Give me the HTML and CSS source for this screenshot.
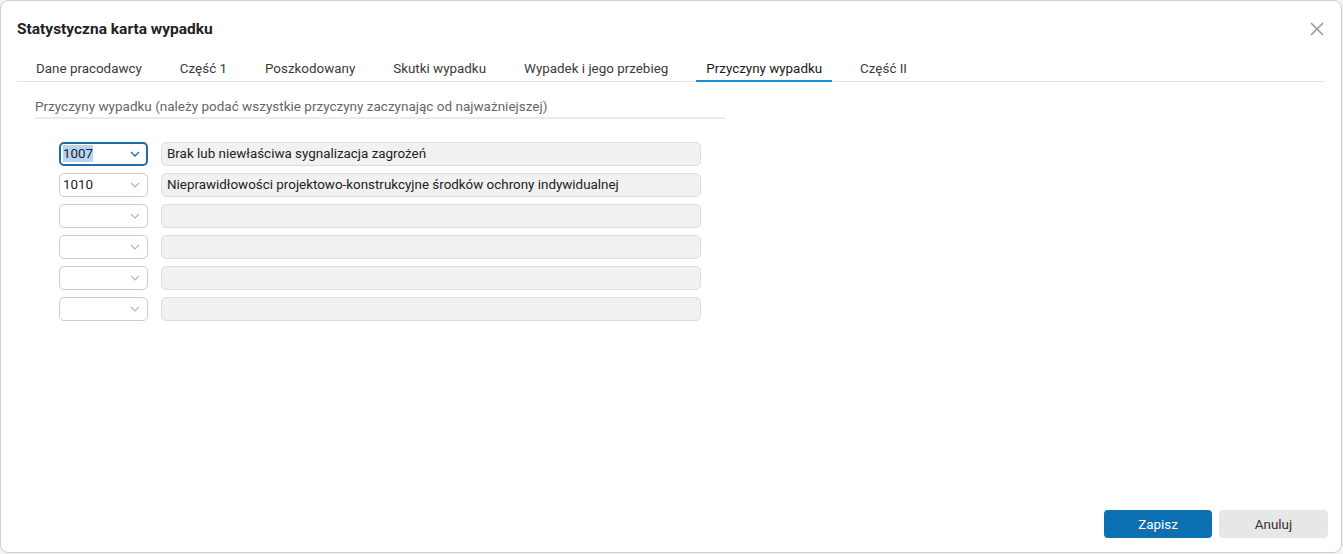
FILE: index.html
```html
<!DOCTYPE html>
<html lang="pl">
<head>
<meta charset="utf-8">
<title>Statystyczna karta wypadku</title>
<link rel="stylesheet" href="styles.css">
</head>
<body>
<div class="dialog">
  <div class="header">
    <h1 class="title">Statystyczna karta wypadku</h1>
    <button class="close" aria-label="Zamknij">
      <svg width="14" height="14" viewBox="0 0 14 14"><path d="M1 1 L13 13 M13 1 L1 13" stroke="#9a9a9a" stroke-width="1.6" fill="none"/></svg>
    </button>
  </div>
  <div class="tabs">
    <div class="tab">Dane pracodawcy</div>
    <div class="tab">Część 1</div>
    <div class="tab">Poszkodowany</div>
    <div class="tab">Skutki wypadku</div>
    <div class="tab">Wypadek i jego przebieg</div>
    <div class="tab active">Przyczyny wypadku</div>
    <div class="tab">Część II</div>
  </div>
  <div class="content">
    <div class="section-label">Przyczyny wypadku (należy podać wszystkie przyczyny zaczynając od najważniejszej)</div>
    <div class="rows">
      <div class="row">
        <div class="select focused"><span class="val"><span class="sel">1007</span></span><svg class="chev" width="10" height="6" viewBox="0 0 10 6"><path d="M1 1 L5 5 L9 1" stroke="#1d6ca5" stroke-width="1.3" fill="none"/></svg></div>
        <div class="field">Brak lub niewłaściwa sygnalizacja zagrożeń</div>
      </div>
      <div class="row">
        <div class="select"><span class="val">1010</span><svg class="chev" width="10" height="6" viewBox="0 0 10 6"><path d="M1 1 L5 5 L9 1" stroke="#b5b5b5" stroke-width="1.1" fill="none"/></svg></div>
        <div class="field">Nieprawidłowości projektowo-konstrukcyjne środków ochrony indywidualnej</div>
      </div>
      <div class="row">
        <div class="select"><span class="val"></span><svg class="chev" width="10" height="6" viewBox="0 0 10 6"><path d="M1 1 L5 5 L9 1" stroke="#b5b5b5" stroke-width="1.1" fill="none"/></svg></div>
        <div class="field"></div>
      </div>
      <div class="row">
        <div class="select"><span class="val"></span><svg class="chev" width="10" height="6" viewBox="0 0 10 6"><path d="M1 1 L5 5 L9 1" stroke="#b5b5b5" stroke-width="1.1" fill="none"/></svg></div>
        <div class="field"></div>
      </div>
      <div class="row">
        <div class="select"><span class="val"></span><svg class="chev" width="10" height="6" viewBox="0 0 10 6"><path d="M1 1 L5 5 L9 1" stroke="#b5b5b5" stroke-width="1.1" fill="none"/></svg></div>
        <div class="field"></div>
      </div>
      <div class="row">
        <div class="select"><span class="val"></span><svg class="chev" width="10" height="6" viewBox="0 0 10 6"><path d="M1 1 L5 5 L9 1" stroke="#b5b5b5" stroke-width="1.1" fill="none"/></svg></div>
        <div class="field"></div>
      </div>
    </div>
  </div>
  <div class="footer">
    <button class="btn primary">Zapisz</button>
    <button class="btn secondary">Anuluj</button>
  </div>
</div>
</body>
</html>
```
FILE: styles.css
```css
* { box-sizing: border-box; }
html, body {
  margin: 0;
  padding: 0;
  background: #f4f4f4;
  font-family: Roboto, "Liberation Sans", sans-serif;
  font-size: 13.4px;
  color: #333;
}
.dialog {
  width: 1342px;
  height: 553px;
  background: #fff;
  border: 1px solid #cfcfcf;
  border-radius: 8px;
  display: flex;
  flex-direction: column;
}
.header {
  display: flex;
  justify-content: space-between;
  align-items: center;
  padding: 18px 17px 17px 16px;
}
.title {
  margin: 0;
  font-size: 15.5px;
  line-height: 20px;
  font-weight: 700;
  color: #222;
}
.close {
  border: 0;
  background: none;
  padding: 0;
  width: 14px;
  height: 14px;
  display: block;
}
.close svg { display: block; }
.tabs {
  display: flex;
  gap: 18px;
  margin: 0 16px;
  padding-left: 9px;
  border-bottom: 1px solid #e2e2e2;
}
.tab {
  padding: 5px 10px 3px;
  line-height: 16px;
  font-size: 13.4px;
  color: #3a3a3a;
  border-bottom: 2px solid transparent;
  margin-bottom: -1px;
  white-space: nowrap;
}
.tab.active {
  color: #1a1a1a;
  border-bottom-color: #1a8fd8;
}
.content {
  flex: 1;
  padding: 16px 34px 0;
}
.section-label {
  width: 690px;
  color: #666;
  font-size: 13.5px;
  line-height: 16px;
  padding-bottom: 3px;
  border-bottom: 2px solid #ebebeb;
}
.rows {
  margin-top: 23px;
  margin-left: 24px;
  display: flex;
  flex-direction: column;
  gap: 7px;
}
.row {
  display: flex;
  gap: 13px;
  height: 24px;
}
.select {
  width: 89px;
  height: 24px;
  border: 1px solid #cdcdcd;
  border-radius: 5px;
  background: #fff;
  display: flex;
  align-items: center;
  justify-content: space-between;
  padding: 0 7px 0 3px;
}
.select.focused {
  border: 2px solid #1d6ca5;
  padding: 0 6px 0 2px;
}
.val {
  color: #222;
  line-height: 16px;
}
.sel {
  background: #b7d5f3;
  padding: 1px 0;
}
.chev { display: block; }
.field {
  width: 540px;
  height: 24px;
  background: #f1f1f1;
  border: 1px solid #dddddd;
  border-radius: 5px;
  padding: 0 5px;
  line-height: 22px;
  color: #222;
  white-space: nowrap;
}
.footer {
  display: flex;
  justify-content: flex-end;
  gap: 7px;
  padding: 0 13px 14px;
}
.btn {
  height: 28px;
  width: 108px;
  border: 0;
  border-radius: 4px;
  font-family: Roboto, "Liberation Sans", sans-serif;
  font-size: 13.4px;
}
.btn.primary {
  background: #0b70b1;
  color: #fff;
}
.btn.secondary {
  width: 109px;
  background: #e7e7e7;
  color: #333;
}
```
